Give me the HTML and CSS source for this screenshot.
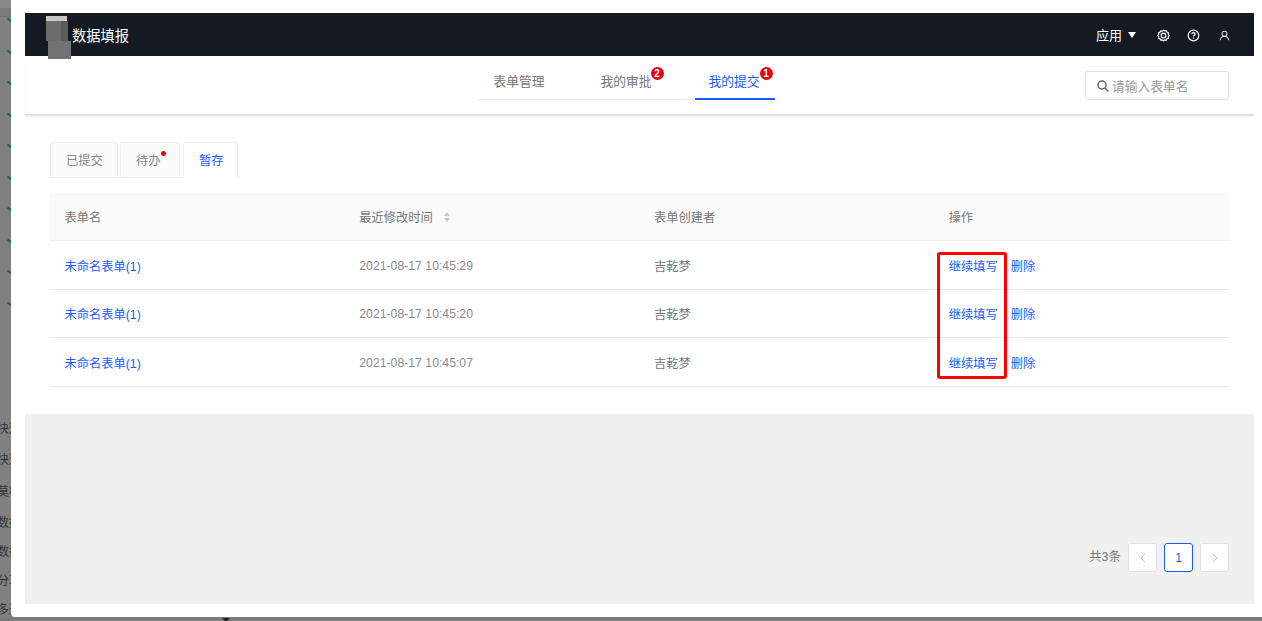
FILE: index.html
```html
<!DOCTYPE html>
<html lang="zh">
<head>
<meta charset="utf-8">
<title>数据填报</title>
<link rel="stylesheet" href="styles.css">
</head>
<body>
<div class="backdrop">
  <div class="strip"></div>
  <div class="ticks">
    <i class="tick t1"></i><i class="tick t2"></i><i class="tick t3"></i><i class="tick t4"></i><i class="tick t5"></i><i class="tick t6"></i><i class="tick t7"></i><i class="tick t8"></i><i class="tick t9"></i><i class="tick t10"></i>
  </div>
  <span class="bg-char c1">快速</span><span class="bg-char c2">快速</span><span class="bg-char c3">莫板</span><span class="bg-char c4">数据</span><span class="bg-char c5">数据</span><span class="bg-char c6">分享</span><span class="bg-char c7">多适</span>
  <div class="bg-bottom"><span class="bg-arrow"></span></div>
</div>

<main class="modal">
  <header class="topbar">
    <div class="brand">数据填报</div>
    <div class="top-actions">
      <span class="app-menu">应用<span class="caret"></span></span>
      <svg class="ico ico-gear" viewBox="0 0 16 16" fill="none" stroke="#fff" stroke-width="1.5"><path d="M8 1.400l1.500 1 1.800-.3.900 1.600 1.700.7-.1 1.800L15 8l-1.200 1.600.1 1.800-1.700.7-.9 1.600-1.800-.3-1.500 1-1.500-1-1.800.3-.9-1.600-1.700-.7.1-1.800L1 8l1.200-1.600-.1-1.800 1.700-.7.9-1.600 1.800.3z"/><circle cx="8" cy="8" r="2.800"/></svg>
      <svg class="ico ico-help" viewBox="0 0 16 16" fill="none" stroke="#fff" stroke-width="1.500"><circle cx="8" cy="8" r="6.500"/><path d="M5.900 6.400C5.900 5.200 6.900 4.500 8 4.500s2.100.7 2.100 1.800c0 1.500-2.100 1.500-2.100 3"/><path d="M8 10.400v1.400"/></svg>
      <svg class="ico ico-user" viewBox="0 0 16 16" fill="none" stroke="#ddd" stroke-width="1.500"><circle cx="8" cy="5.500" r="3.600"/><path d="M1.800 15c.4-3.600 2.800-6 6.200-6s5.800 2.400 6.200 6"/></svg>
    </div>
  </header>

  <nav class="subnav">
    <div class="nav-tabs">
      <a class="nav-tab">表单管理</a>
      <a class="nav-tab">我的审批<b class="badge">2</b></a>
      <a class="nav-tab active">我的提交<b class="badge">1</b></a>
    </div>
    <label class="search">
      <svg class="search-ico" viewBox="0 0 14 14" fill="none" stroke="#666" stroke-width="1.5"><circle cx="6" cy="6" r="4"/><path d="M9 9l3.500 3.500"/></svg>
      <span>请输入表单名</span>
    </label>
  </nav>

  <section class="content">
    <div class="tabs">
      <a class="tab">已提交</a>
      <a class="tab tab-dot">待办<i class="dot"></i></a>
      <a class="tab active">暂存</a>
    </div>
    <div class="table">
      <div class="row head">
        <div class="cell">表单名</div>
        <div class="cell">最近修改时间<span class="sorter"><i class="up"></i><i class="down"></i></span></div>
        <div class="cell">表单创建者</div>
        <div class="cell">操作</div>
      </div>
      <div class="row">
        <div class="cell"><a class="link">未命名表单(1)</a></div>
        <div class="cell muted">2021-08-17 10:45:29</div>
        <div class="cell">吉乾梦</div>
        <div class="cell actions"><a class="link">继续填写</a><a class="link">删除</a></div>
      </div>
      <div class="row">
        <div class="cell"><a class="link">未命名表单(1)</a></div>
        <div class="cell muted">2021-08-17 10:45:20</div>
        <div class="cell">吉乾梦</div>
        <div class="cell actions"><a class="link">继续填写</a><a class="link">删除</a></div>
      </div>
      <div class="row">
        <div class="cell"><a class="link">未命名表单(1)</a></div>
        <div class="cell muted">2021-08-17 10:45:07</div>
        <div class="cell">吉乾梦</div>
        <div class="cell actions"><a class="link">继续填写</a><a class="link">删除</a></div>
      </div>
    </div>
  </section>

  <footer class="panel">
    <span class="total">共3条</span>
    <span class="pg"><svg viewBox="0 0 10 10" fill="none" stroke="#c4c4c4" stroke-width="1"><path d="M7 1L3 5l4 4"/></svg></span>
    <span class="pg current">1</span>
    <span class="pg"><svg viewBox="0 0 10 10" fill="none" stroke="#c4c4c4" stroke-width="1"><path d="M3 1l4 4-4 4"/></svg></span>
  </footer>

  <div class="logo-blur"><i class="lb-top"></i><i class="lb-mid"></i><i class="lb-side"></i><i class="lb-low"></i></div>
  <div class="annotation"></div>
</main>
</body>
</html>
```
FILE: styles.css
```css
* { box-sizing: border-box; }
html, body { margin: 0; height: 621px; overflow: hidden; }
body {
  background: #808080;
  font-family: "Liberation Sans", "Noto Sans CJK SC", sans-serif;
  font-size: 12px;
  color: #777;
}
a { text-decoration: none; }

/* dimmed page behind the dialog */
.backdrop { position: absolute; inset: 0; overflow: hidden; }
.strip {
  position: absolute; left: 0; top: 0; width: 11px; height: 17px;
  background: linear-gradient(#8a8a8a 0 8px, #7a7a7a 8px 16px, #707070 16px);
}
.tick {
  position: absolute; left: 7px; width: 5px; height: 2px;
  background: #0a6a58;
  transform: rotate(40deg);
}
.t1 { top: 19px; } .t2 { top: 51px; } .t3 { top: 82px; } .t4 { top: 114px; } .t5 { top: 145px; }
.t6 { top: 177px; } .t7 { top: 208px; } .t8 { top: 240px; } .t9 { top: 271px; } .t10 { top: 303px; }
.bg-char { position: absolute; left: -3px; width: 14px; overflow: hidden; white-space: nowrap; color: #333; font-size: 12px; line-height: 14px; }
.c1 { top: 422px; } .c2 { top: 453px; } .c3 { top: 485px; } .c4 { top: 516px; } .c5 { top: 545px; } .c6 { top: 574px; } .c7 { top: 603px; }
.bg-bottom { position: absolute; left: 0; right: 0; top: 617px; height: 4px; background: #7c7c7c; }
.bg-arrow {
  position: absolute; left: 222px; top: 1px;
  border-left: 4px solid transparent; border-right: 4px solid transparent; border-top: 4px solid #222;
}

/* dialog */
.modal {
  position: relative;
  margin-left: 11px;
  width: 1251px;
  height: 617px;
  background: #fff;
  border-bottom-left-radius: 4px;
  padding: 13px 8px 0 14px;
  display: flex;
  flex-direction: column;
}
.topbar {
  height: 43px;
  flex: none;
  background: #141922;
  display: flex;
  align-items: center;
  justify-content: space-between;
  padding: 0 24px 0 47px;
  color: #fff;
}
.brand { font-size: 14.250px; margin-top: -1px; }
.top-actions { display: flex; align-items: center; margin-top: 1px; }
.app-menu { font-size: 13px; display: flex; align-items: center; margin-top: -2px; }
.caret {
  margin-left: 6px;
  margin-top: 2px;
  border-left: 4px solid transparent; border-right: 4px solid transparent; border-top: 6px solid #fff;
}
.ico { flex: none; }
.ico-gear { width: 13px; height: 13px; margin-left: 21px; }
.ico-help { width: 13px; height: 13px; margin-left: 17px; }
.ico-user { width: 11px; height: 11px; margin-left: 19px; }

.subnav {
  height: 59px;
  flex: none;
  position: relative;
  display: flex;
  justify-content: center;
  border-bottom: 1px solid #dcdcdc;
  box-shadow: 0 2px 2px -1px rgba(0, 0, 0, .16);
}
.nav-tabs {
  height: 44px;
  display: flex;
  border-bottom: 1px solid #eee;
  margin-left: -27px;
}
.nav-tab {
  position: relative;
  width: 108px;
  padding-left: 15px;
  font-size: 12.750px;
  line-height: 52px;
  color: #777;
  white-space: nowrap;
}
.nav-tab:first-child { width: 108px; padding-left: 16px; }
.nav-tab:nth-child(2) { width: 109px; }
.nav-tab.active { color: #1a5cff; width: 80px; border-bottom: 2px solid #1a5cff; height: 44px; padding-left: 14px; }
.badge {
  position: absolute;
  left: 65px; top: 11px;
  width: 13px; height: 13px;
  border-radius: 50%;
  background: #e60012;
  color: #fff;
  font: 700 10px/13px "Liberation Sans", sans-serif;
  text-align: center;
}
.search {
  position: absolute;
  right: 25px; top: 15px;
  width: 144px; height: 29px;
  border: 1px solid #e2e2e2;
  border-radius: 3px;
  display: flex;
  align-items: center;
  padding-left: 10px;
  color: #9a9a9a;
  font-size: 12.750px;
}
.search-ico { width: 14px; height: 14px; margin-right: 2px; }

.content { padding: 27px 25px 0; flex: none; height: 299px; }
.tabs {
  display: flex;
  height: 36px;
  width: 190px;
  gap: 2px;
  border-bottom: 1px solid #eee;
}
.tab {
  height: 36px;
  padding-left: 15px;
  width: 68px;
  background: #fafafa;
  border: 1px solid #eee;
  border-radius: 3px 3px 0 0;
  line-height: 37px;
  font-size: 12.300px;
  color: #888;
  position: relative;
}
.tab-dot { width: 60px; margin-right: 1px; }
.tab.active { width: 55px; background: #fff; border-bottom-color: #fff; color: #1a5cff; }
.dot {
  position: absolute; left: 40px; top: 8px;
  width: 5px; height: 5px; border-radius: 50%; background: #e60012;
}

.table { margin-top: 15px; }
.row {
  display: grid;
  grid-template-columns: repeat(4, 1fr);
  height: 48.670px;
  border-bottom: 1px solid #e8e8e8;
  align-items: center;
}
.row.head { height: 48px; background: #fafafa; border-bottom-color: #f0f0f0; }
.cell { padding: 2px 0 0 14.500px; font-size: 12.250px; color: #777; white-space: nowrap; display: flex; align-items: center; }
.head .cell { padding-top: 1px; }
.muted { color: #8c8c8c; font-size: 12.250px; }
.link { color: #1a5cff; }
.actions { gap: 13px; }
.sorter { display: inline-flex; flex-direction: column; gap: 2px; margin-left: 11px; }
.sorter i { width: 0; height: 0; border-left: 3.500px solid transparent; border-right: 3.500px solid transparent; }
.sorter .up { border-bottom: 4px solid #c8c8c8; }
.sorter .down { border-top: 4px solid #c8c8c8; }

.panel {
  height: 190px;
  flex: none;
  background: #f0f0f0;
  display: flex;
  align-items: flex-start;
  justify-content: flex-end;
  padding: 129px 25px 0 0;
  gap: 7px;
}
.total { line-height: 29px; color: #777; font-size: 12.500px; }
.pg {
  width: 29px; height: 29px;
  border: 1px solid #e2e2e2;
  border-radius: 3px;
  background: #fff;
  display: flex; align-items: center; justify-content: center;
  font-size: 12px;
}
.pg svg { width: 10px; height: 10px; }
.pg.current { border-color: #1a5cff; color: #1a5cff; }

/* redaction smear over the logo */
.logo-blur { position: absolute; left: 35px; top: 16px; width: 26px; height: 44px; }
.logo-blur i { position: absolute; display: block; }
.lb-top { left: 0; top: 0; width: 21px; height: 5px; background: #c8c8c8; }
.lb-mid { left: 0; top: 5px; width: 15px; height: 20px; background: #6c6c6c; }
.lb-side { left: 15px; top: 5px; width: 7px; height: 20px; background: #5c5c5c; }
.lb-low { left: 2px; top: 25px; width: 23px; height: 18px; background: #727272; }

/* red review mark */
.annotation {
  position: absolute;
  left: 926px; top: 252px;
  width: 70px; height: 127px;
  border: 3px solid #f00;
  border-radius: 3px;
}
```
